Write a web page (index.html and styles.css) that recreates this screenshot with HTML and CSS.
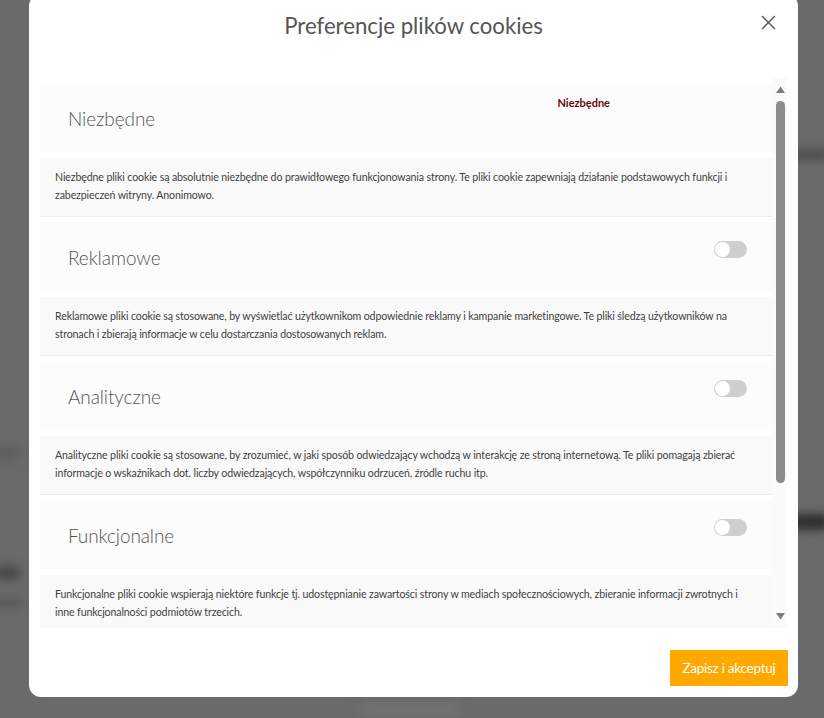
FILE: index.html
```html
<!DOCTYPE html>
<html lang="pl">
<head>
<meta charset="utf-8">
<title>Preferencje plików cookies</title>
<link rel="stylesheet" href="styles.css">
</head>
<body>
<div class="backdrop">
  <span class="blob b1"></span>
  <span class="blob b2"></span>
  <span class="blob b3"></span>
  <span class="blob b4"></span>
  <span class="blob b5"></span>
  <span class="blob b6"></span>
</div>
<div class="modal">
  <div class="modal-header">
    <span></span>
    <h1 class="modal-title">Preferencje plików cookies</h1>
    <button class="close" aria-label="Zamknij">
      <svg width="15" height="15" viewBox="0 0 15 15"><path d="M1 1 L14 14 M14 1 L1 14" stroke="#555" stroke-width="1.4" fill="none"/></svg>
    </button>
  </div>
  <div class="modal-body">
    <div class="list">
      <section class="item">
        <div class="item-head">
          <h2 class="item-title">Niezbędne</h2>
          <span class="required">Niezbędne</span>
        </div>
        <p class="item-desc">Niezbędne pliki cookie są absolutnie niezbędne do prawidłowego funkcjonowania strony. Te pliki cookie zapewniają działanie podstawowych funkcji i zabezpieczeń witryny. Anonimowo.</p>
      </section>
      <section class="item">
        <div class="item-head">
          <h2 class="item-title">Reklamowe</h2>
          <span class="toggle"><span class="knob"></span></span>
        </div>
        <p class="item-desc">Reklamowe pliki cookie są stosowane, by wyświetlać użytkownikom odpowiednie reklamy i kampanie marketingowe. Te pliki śledzą użytkowników na stronach i zbierają informacje w celu dostarczania dostosowanych reklam.</p>
      </section>
      <section class="item">
        <div class="item-head">
          <h2 class="item-title">Analityczne</h2>
          <span class="toggle"><span class="knob"></span></span>
        </div>
        <p class="item-desc">Analityczne pliki cookie są stosowane, by zrozumieć, w jaki sposób odwiedzający wchodzą w interakcję ze stroną internetową. Te pliki pomagają zbierać informacje o wskaźnikach dot. liczby odwiedzających, współczynniku odrzuceń, źródle ruchu itp.</p>
      </section>
      <section class="item">
        <div class="item-head">
          <h2 class="item-title">Funkcjonalne</h2>
          <span class="toggle"><span class="knob"></span></span>
        </div>
        <p class="item-desc">Funkcjonalne pliki cookie wspierają niektóre funkcje tj. udostępnianie zawartości strony w mediach społecznościowych, zbieranie informacji zwrotnych i inne funkcjonalności podmiotów trzecich.</p>
      </section>
    </div>
    <div class="scrollbar">
      <svg class="arrow" width="9" height="7" viewBox="0 0 9 7"><path d="M4.5 0.5 L9 7 L0 7 Z" fill="#7d7d7d"/></svg>
      <span class="thumb"></span>
      <svg class="arrow down" width="9" height="7" viewBox="0 0 9 7"><path d="M0 0 L9 0 L4.5 6.5 Z" fill="#7d7d7d"/></svg>
    </div>
  </div>
  <div class="modal-footer">
    <button class="save">Zapisz i akceptuj</button>
  </div>
</div>
</body>
</html>
```

FILE: styles.css
```css
* { box-sizing: border-box; }

html, body {
  margin: 0;
  padding: 0;
  height: 718px;
  overflow: hidden;
}

body {
  background: #6a6a6a;
  font-family: Lato, "Open Sans", sans-serif;
  position: relative;
}

.backdrop {
  position: absolute;
  inset: 0;
  overflow: hidden;
}

.blob {
  position: absolute;
  display: block;
  filter: blur(5px);
  border-radius: 4px;
}
.b1 { left: 790px; top: 150px; width: 40px; height: 10px; background: #4c4c4c; }
.b2 { left: 790px; top: 514px; width: 40px; height: 16px; background: #2e2e2e; }
.b3 { left: -6px; top: 566px; width: 26px; height: 14px; background: #484848; }
.b4 { left: -6px; top: 598px; width: 30px; height: 10px; background: #5a5a5a; }
.b5 { left: 360px; top: 702px; width: 100px; height: 14px; background: #727272; }
.b6 { left: -6px; top: 446px; width: 26px; height: 14px; background: #5e5e5e; }

.modal {
  position: relative;
  z-index: 1;
  margin: -6px 0 0 29px;
  width: 769px;
  height: 703px;
  background: #fff;
  border-radius: 12px;
  display: flex;
  flex-direction: column;
}

.modal-header {
  height: 84px;
  display: grid;
  grid-template-columns: 1fr auto 1fr;
  align-items: start;
  padding-top: 17px;
}

.modal-title {
  margin: 0;
  font-size: 22.2px;
  line-height: 30px;
  font-weight: 400;
  color: #555;
}

.close {
  justify-self: end;
  margin: 4px 22px 0 0;
  padding: 0;
  border: 0;
  background: none;
  width: 15px;
  height: 15px;
  display: flex;
}

.modal-body {
  margin: 0 11px 0 11px;
  height: 550px;
  display: flex;
}

.list {
  flex: 1;
  overflow: hidden;
}

.item {
  padding-top: 5px;
  border-bottom: 1px solid #ececec;
}

.item-head {
  height: 70px;
  background: #fcfcfc;
  display: flex;
  align-items: center;
  padding: 0 25px 0 28px;
}

.item-title {
  margin: 0;
  font-size: 19px;
  letter-spacing: -0.1px;
  font-weight: 300;
  color: #555;
  flex: 1;
}

.required {
  align-self: flex-start;
  margin: 13px 137px 0 0;
  font-size: 11px;
  line-height: 14px;
  font-weight: 700;
  color: #6b0707;
}

.toggle {
  align-self: flex-start;
  margin-top: 19px;
  width: 33px;
  height: 17px;
  border-radius: 9px;
  background: #cfcfcf;
  display: flex;
  align-items: center;
  padding-left: 1px;
}

.knob {
  width: 15px;
  height: 15px;
  border-radius: 50%;
  background: #fff;
}

.item-desc {
  margin: 5px 0 0;
  min-height: 58px;
  background: #f9f9f9;
  padding: 10px 15px;
  font-size: 10.6px;
  letter-spacing: -0.12px;
  line-height: 18px;
  color: #3f3f3f;
}

.scrollbar {
  width: 15px;
  background: #fafafa;
  display: flex;
  flex-direction: column;
  align-items: center;
  padding: 8px 0 8px 1px;
}

.arrow { display: block; }

.thumb {
  margin-top: 8px;
  width: 9px;
  height: 382px;
  border-radius: 5px;
  background: #8b8b8b;
}

.arrow.down { margin-top: auto; }

.modal-footer {
  flex: 1;
  display: flex;
  justify-content: flex-end;
  align-items: flex-start;
  padding: 22px 10px 0 0;
}

.save {
  width: 118px;
  height: 36px;
  border: 0;
  background: #ffa800;
  color: #fff;
  font-family: inherit;
  font-size: 13.5px;
  letter-spacing: -0.25px;
  padding: 0;
}
```
